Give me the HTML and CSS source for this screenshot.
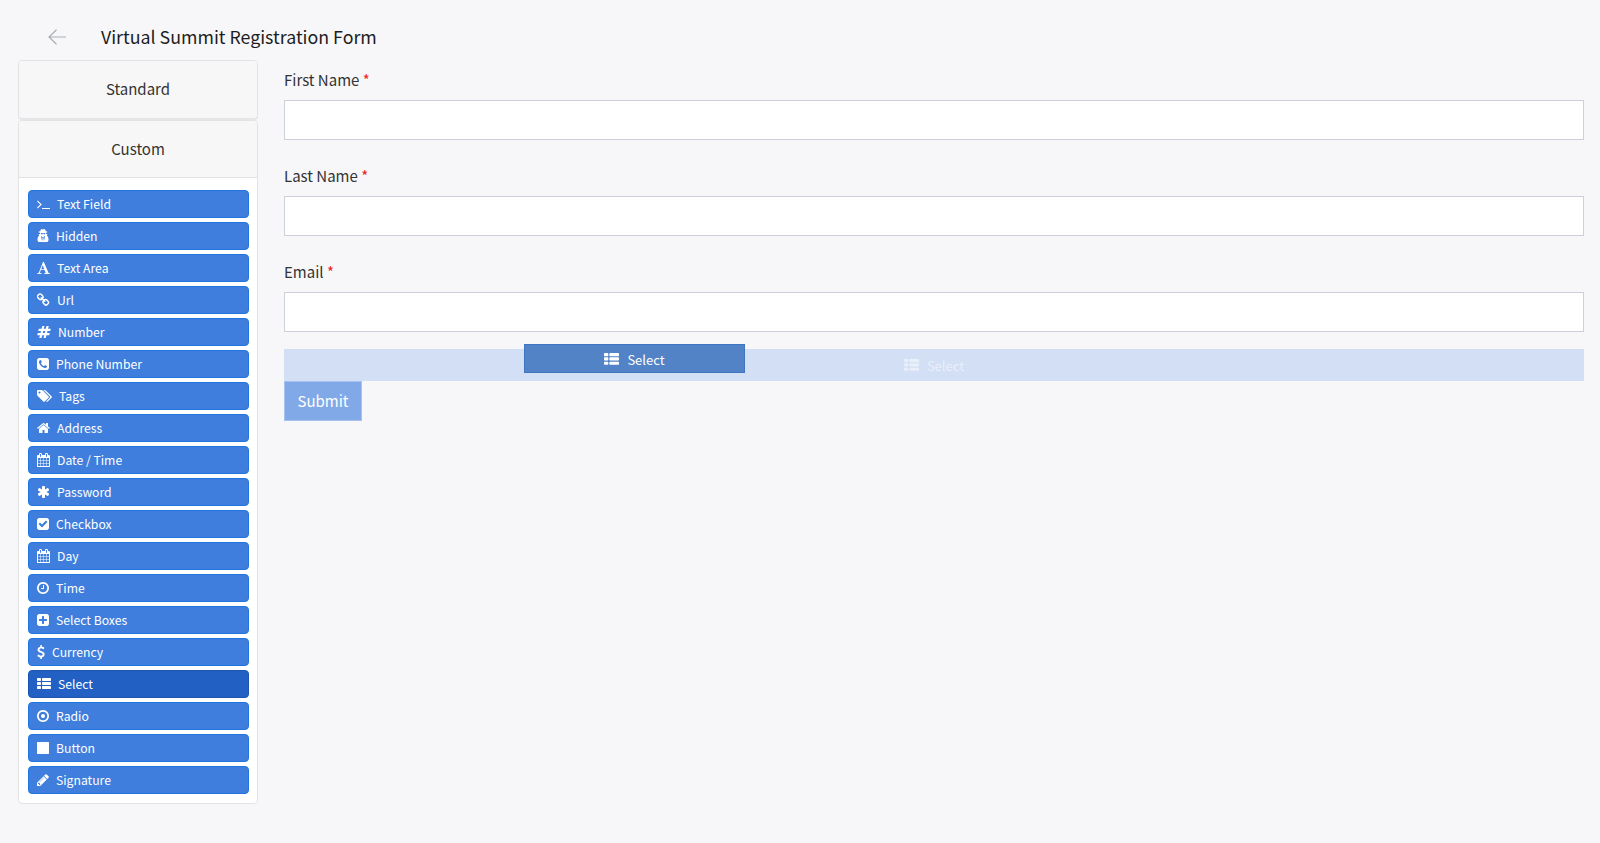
FILE: index.html
```html
<!DOCTYPE html>
<html lang="en">
<head>
    <meta charset="UTF-8">
    <meta name="viewport" content="width=device-width, initial-scale=1.0">
    <title>Virtual Summit Registration Form</title>
    <link rel="stylesheet" href="styles.css">
</head>
<body>
    <!-- Icon set -->
    <svg class="icon-defs" xmlns="http://www.w3.org/2000/svg">
        <symbol id="i-terminal" viewBox="64 0 1664 1792"><path d="M649 983l-466 466q-10 10-23 10t-23-10l-50-50q-10-10-10-23t10-23l393-393-393-393q-10-10-10-23t10-23l50-50q10-10 23-10t23 10l466 466q10 10 10 23t-10 23zm1079 457v64q0 14-9 23t-23 9h-960q-14 0-23-9t-9-23v-64q0-14 9-23t23-9h960q14 0 23 9t9 23z"/></symbol>
        <symbol id="i-secret" viewBox="0 0 1408 1792"><path d="M576 1536l96-448-96-128-128-64zm256 0l128-640-128 64-96 128zm160-1010q-2-4-4-6-10-8-96-8-70 0-167 19-7 2-21 2t-21-2q-97-19-167-19-86 0-96 8-2 2-4 6 2 18 4 27 2 3 7.5 6.5t7.5 10.5q2 4 7.5 20.5t7 20.5 7.5 17 8.5 17 9 14 12 13.5 14 9.5 17.5 8 20.5 4 24.5 2q36 0 59-12.5t32.5-30 14.5-34.5 11.5-29.5 17.5-12.5h12q11 0 17.5 12.5t11.5 29.5 14.5 34.5 32.5 30 59 12.5q13 0 24.5-2t20.5-4 17.5-8 14-9.5 12-13.5 9-14 8.5-17 7.5-17 7-20.5 7.5-20.5q2-7 7.5-10.5t7.5-6.5q2-9 4-27zm416 879q0 121-73 190t-194 69h-874q-121 0-194-69t-73-190q0-61 4.5-118t19-125.5 37.5-123.5 64-104.5 93-75.5l-90-220h214q-22-64-22-128 0-12 2-32-194-40-194-96 0-57 210-99 17-62 51.5-134t70.5-114q32-37 76-37 30 0 84 31t84 31 84-31 84-31q44 0 76 36 36 42 70.5 114t51.5 134q210 42 210 99 0 56-194 96 7 81-20 160h214l-82 225q63 33 107.5 96.5t65.5 143.5 29 151.5 8 148.5z"/></symbol>
        <symbol id="i-font" viewBox="64 0 1664 1792"><path d="M789 559l-170 450q33 0 136.5 2t160.5 2q19 0 57-2-87-253-184-452zm-725 1105l2-79q23-7 56-12.5t57-10.5 49.5-14.5 44.5-29 31-50.5l237-616 280-724h128q8 14 11 21l205 480q33 78 106 257.5t114 274.5q15 34 58 144.5t72 168.5q20 45 35 57 19 15 88 29.5t84 20.5q6 38 6 57 0 5-.5 13.5t-.5 12.5q-63 0-190-8t-191-8q-76 0-215 7t-178 8q0-43 4-78l131-28q1 0 12.5-2.5t15.5-3.5 14.5-4.5 15-6.5 11-8 9-11 2.5-14q0-16-31-96.5t-72-177.5-42-100l-450-2q-26 58-76.5 195.5t-50.5 162.5q0 22 14 37.5t43.5 24.5 48.5 13.5 57 8.5 41 4q1 19 1 58 0 9-2 27-58 0-174.5-10t-174.5-10q-8 0-26.5 4t-21.5 4q-80 14-188 14z"/></symbol>
        <symbol id="i-link" viewBox="128 0 1536 1792"><path d="M1456 1216q0-40-28-68l-208-208q-28-28-68-28-42 0-72 32 3 3 19 18.5t21.5 21.5 15 19 13 25.5 3.5 27.5q0 40-28 68t-68 28q-15 0-27.5-3.5t-25.5-13-19-15-21.5-21.5-18.5-19q-33 31-33 73 0 40 28 68l206 207q27 27 68 27 40 0 68-26l147-146q28-28 28-67zm-703-705q0-40-28-68l-206-207q-28-28-68-28-39 0-68 27l-147 146q-28 28-28 67 0 40 28 68l208 208q27 27 68 27 42 0 72-31-3-3-19-18.5t-21.5-21.5-15-19-13-25.5-3.5-27.5q0-40 28-68t68-28q15 0 27.5 3.5t25.5 13 19 15 21.5 21.5 18.5 19q33-31 33-73zm895 705q0 120-85 203l-147 146q-83 83-203 83-121 0-204-85l-206-207q-83-83-83-203 0-123 88-209l-88-88q-86 88-208 88-120 0-204-84l-208-208q-84-84-84-204t85-203l147-146q83-83 203-83 121 0 204 85l206 207q83 83 83 203 0 123-88 209l88 88q86-88 208-88 120 0 204 84l208 208q84 84 84 204z"/></symbol>
        <symbol id="i-hash" viewBox="0 0 1792 1792"><path d="M991 1024l64-256h-254l-64 256h254zm768-504l-56 224q-7 24-31 24h-327l-64 256h311q15 0 25 12 10 14 6 28l-56 224q-5 24-31 24h-327l-81 328q-7 24-31 24h-224q-16 0-26-12-9-12-6-28l78-312h-254l-81 328q-7 24-31 24h-225q-15 0-25-12-9-12-6-28l78-312h-311q-15 0-25-12-9-12-6-28l56-224q7-24 31-24h327l64-256h-311q-15 0-25-12-10-14-6-28l56-224q5-24 31-24h327l81-328q7-24 32-24h224q15 0 25 12 9 12 6 28l-78 312h254l81-328q7-24 32-24h224q15 0 25 12 9 12 6 28l-78 312h311q15 0 25 12 9 12 6 28z"/></symbol>
        <symbol id="i-phone" viewBox="128 0 1536 1792"><path d="M1408 1193q0-11-2-16t-18-16.5-40.5-25-47.5-26.5-45.5-25-28.5-15q-5-3-19-13t-25-15-21-5q-15 0-36.5 20.5t-39.5 45-38.5 45-33.5 20.5q-7 0-16.5-3.5t-15.5-6.5-17-9.5-14-8.5q-99-55-170-126.5t-127-170.5q-2-3-8.5-14t-9.5-17-6.5-15.5-3.5-16.5q0-13 20.5-33.5t45-38.5 45-39.5 20.5-36.5q0-10-5-21t-15-25-13-19q-3-6-15-28.5t-25-45.5-26.5-47.5-25-40.5-16.5-18-16-2q-48 0-101 22-46 21-80 94.5t-34 130.5q0 16 2.5 34t5 30.5 9 33 10 29.5 12.5 33 11 30q60 164 216.5 320.5t320.5 216.5q6 2 30 11t33 12.5 29.5 10 33 9 30.5 5 34 2.5q57 0 130.5-34t94.5-80q22-53 22-101zm256-777v960q0 119-84.5 203.5t-203.5 84.5h-960q-119 0-203.5-84.5t-84.5-203.5v-960q0-119 84.5-203.5t203.5-84.5h960q119 0 203.5 84.5t84.5 203.5z"/></symbol>
        <symbol id="i-tags" viewBox="0 0 1920 1792"><path d="M448 448q0-53-37.5-90.5t-90.5-37.5-90.5 37.5-37.5 90.5 37.5 90.5 90.5 37.5 90.5-37.5 37.5-90.5zm1067 576q0 53-37 90l-491 492q-39 37-91 37-53 0-90-37l-715-716q-38-37-64.5-101t-26.5-117v-416q0-52 38-90t90-38h416q53 0 117 26.5t102 64.5l715 714q37 39 37 91zm384 0q0 53-37 90l-491 492q-39 37-91 37-36 0-59-14t-53-45l470-470q37-37 37-90 0-52-37-91l-715-714q-38-38-102-64.5t-117-26.5h224q53 0 117 26.5t102 64.5l715 714q37 39 37 91z"/></symbol>
        <symbol id="i-home" viewBox="64 0 1664 1792"><path d="M1472 992v480q0 26-19 45t-45 19h-384v-384h-256v384h-384q-26 0-45-19t-19-45v-480q0-1 .5-3t.5-3l575-474 575 474q1 2 1 6zm223-69l-62 74q-8 9-21 11h-3q-13 0-21-7l-692-577-692 577q-12 8-24 7-13-2-21-11l-62-74q-8-10-7-23.5t11-21.5l719-599q32-26 76-26t76 26l244 204v-195q0-14 9-23t23-9h192q14 0 23 9t9 23v408l219 182q10 8 11 21.5t-7 23.5z"/></symbol>
        <symbol id="i-calendar" viewBox="64 0 1664 1792"><path d="M192 1664h288v-288h-288v288zm352 0h320v-288h-320v288zm-352-352h288v-320h-288v320zm352 0h320v-320h-320v320zm-352-384h288v-288h-288v288zm736 736h320v-288h-320v288zm-384-736h320v-288h-320v288zm768 736h288v-288h-288v288zm-384-352h320v-320h-320v320zm-352-864v-288q0-13-9.5-22.5t-22.5-9.5h-64q-13 0-22.5 9.5t-9.5 22.5v288q0 13 9.5 22.5t22.5 9.5h64q13 0 22.5-9.5t9.5-22.5zm736 864h288v-320h-288v320zm-384-384h320v-288h-320v288zm384 0h288v-288h-288v288zm32-480v-288q0-13-9.5-22.5t-22.5-9.5h-64q-13 0-22.5 9.5t-9.5 22.5v288q0 13 9.5 22.5t22.5 9.5h64q13 0 22.5-9.5t9.5-22.5zm384-64v1280q0 52-38 90t-90 38h-1408q-52 0-90-38t-38-90v-1280q0-52 38-90t90-38h128v-96q0-66 47-113t113-47h64q66 0 113 47t47 113v96h384v-96q0-66 47-113t113-47h64q66 0 113 47t47 113v96h128q52 0 90 38t38 90z"/></symbol>
        <symbol id="i-asterisk" viewBox="128 0 1536 1792"><path d="M1546 1050q46 26 59.5 77.5t-12.5 97.5l-64 110q-26 46-77.5 59.5t-97.5-12.5l-266-153v307q0 52-38 90t-90 38h-128q-52 0-90-38t-38-90v-307l-266 153q-46 26-97.5 12.5t-77.5-59.5l-64-110q-26-46-12.5-97.5t59.5-77.5l266-154-266-154q-46-26-59.5-77.5t12.5-97.5l64-110q26-46 77.5-59.5t97.5 12.5l266 153v-307q0-52 38-90t90-38h128q52 0 90 38t38 90v307l266-153q46-26 97.5-12.5t77.5 59.5l64 110q26 46 12.5 97.5t-59.5 77.5l-266 154z"/></symbol>
        <symbol id="i-check" viewBox="128 0 1536 1792"><path d="M813 1299l614-614q19-19 19-45t-19-45l-102-102q-19-19-45-19t-45 19l-467 467-211-211q-19-19-45-19t-45 19l-102 102q-19 19-19 45t19 45l358 358q19 19 45 19t45-19zm851-883v960q0 119-84.5 203.5t-203.5 84.5h-960q-119 0-203.5-84.5t-84.5-203.5v-960q0-119 84.5-203.5t203.5-84.5h960q119 0 203.5 84.5t84.5 203.5z"/></symbol>
        <symbol id="i-clock" viewBox="128 0 1536 1792"><path d="M1024 544v448q0 14-9 23t-23 9h-320q-14 0-23-9t-9-23v-64q0-14 9-23t23-9h224v-352q0-14 9-23t23-9h64q14 0 23 9t9 23zm416 352q0-148-73-273t-198-198-273-73-273 73-198 198-73 273 73 273 198 198 273 73 273-73 198-198 73-273zm224 0q0 209-103 385.5t-279.5 279.5-385.5 103-385.5-103-279.5-279.5-103-385.5 103-385.5 279.5-279.5 385.5-103 385.5 103 279.5 279.5 103 385.5z"/></symbol>
        <symbol id="i-plus" viewBox="128 0 1536 1792"><path d="M1408 960v-128q0-26-19-45t-45-19h-320v-320q0-26-19-45t-45-19h-128q-26 0-45 19t-19 45v320h-320q-26 0-45 19t-19 45v128q0 26 19 45t45 19h320v320q0 26 19 45t45 19h128q26 0 45-19t19-45v-320h320q26 0 45-19t19-45zm256-544v960q0 119-84.5 203.5t-203.5 84.5h-960q-119 0-203.5-84.5t-84.5-203.5v-960q0-119 84.5-203.5t203.5-84.5h960q119 0 203.5 84.5t84.5 203.5z"/></symbol>
        <symbol id="i-dollar" viewBox="384 0 1024 1792"><path d="M1362 1185q0 153-99.5 263.5t-258.5 136.5v175q0 14-9 23t-23 9h-135q-13 0-22.5-9.5t-9.5-22.5v-175q-66-9-127.5-31t-101.5-44.5-74-48-46.5-37.5-17.5-18q-17-21-2-41l103-135q7-10 23-12 15-2 24 9l2 2q113 99 243 125 37 8 74 8 81 0 142.5-43t61.5-122q0-28-15-53t-33.5-42-58.5-37.5-66-32-80-32.5q-39-16-61.5-25t-61.5-26.5-62.5-31-56.5-35.5-53.5-42.5-43.5-49-35.5-58-21-66.5-8.5-78q0-138 98-242t255-134v-180q0-13 9.5-22.5t22.5-9.5h135q14 0 23 9t9 23v176q57 6 110.5 23t87 33.5 63.5 37.5 39 29 15 14q17 18 5 38l-81 146q-8 15-23 16-14 3-27-7-3-3-14.5-12t-39-26.5-58.5-32-74.5-26-85.5-11.5q-95 0-155 43t-60 111q0 26 8.5 48t29.5 41.5 39.5 33 56 31 60.5 27 70 27.5q53 20 81 31.5t76 35 75.5 42.5 62 50 53 63.5 31.5 76.5 13 94z"/></symbol>
        <symbol id="i-list" viewBox="0 0 1792 1792"><path d="M512 1248v192q0 40-28 68t-68 28h-320q-40 0-68-28t-28-68v-192q0-40 28-68t68-28h320q40 0 68 28t28 68zm0-512v192q0 40-28 68t-68 28h-320q-40 0-68-28t-28-68v-192q0-40 28-68t68-28h320q40 0 68 28t28 68zm1280 512v192q0 40-28 68t-68 28h-960q-40 0-68-28t-28-68v-192q0-40 28-68t68-28h960q40 0 68 28t28 68zm-1280-1024v192q0 40-28 68t-68 28h-320q-40 0-68-28t-28-68v-192q0-40 28-68t68-28h320q40 0 68 28t28 68zm1280 512v192q0 40-28 68t-68 28h-960q-40 0-68-28t-28-68v-192q0-40 28-68t68-28h960q40 0 68 28t28 68zm0-512v192q0 40-28 68t-68 28h-960q-40 0-68-28t-28-68v-192q0-40 28-68t68-28h960q40 0 68 28t28 68z"/></symbol>
        <symbol id="i-dot" viewBox="128 0 1536 1792"><path d="M1152 896q0 106-75 181t-181 75-181-75-75-181 75-181 181-75 181 75 75 181zm-256-544q-148 0-273 73t-198 198-73 273 73 273 198 198 273 73 273-73 198-198 73-273-73-273-198-198-273-73zm768 544q0 209-103 385.5t-279.5 279.5-385.5 103-385.5-103-279.5-279.5-103-385.5 103-385.5 279.5-279.5 385.5-103 385.5 103 279.5 279.5 103 385.5z"/></symbol>
        <symbol id="i-stop" viewBox="128 0 1536 1792"><path d="M1664 192v1408q0 26-19 45t-45 19h-1408q-26 0-45-19t-19-45v-1408q0-26 19-45t45-19h1408q26 0 45 19t19 45z"/></symbol>
        <symbol id="i-pencil" viewBox="128 0 1536 1792"><path d="M491 1536l91-91-235-235-91 91v107h128v128h107zm523-928q0-22-22-22-10 0-17 7l-542 542q-7 7-7 17 0 22 22 22 10 0 17-7l542-542q7-7 7-17zm-54-192l416 416-832 832h-416v-416zm683 96q0 53-37 90l-166 166-416-416 166-165q36-38 90-38 53 0 91 38l235 234q37 39 37 91z"/></symbol>
    </svg>

    <header class="page-head">
        <svg class="back-arrow" viewBox="0 0 18 16" width="18" height="16" fill="none" stroke="#a9adb3" stroke-width="1.2">
            <path d="M18 8H1M8.5 0.8L1 8l7.5 7.2"/>
        </svg>
        <h1>Virtual Summit Registration Form</h1>
    </header>

    <main class="builder">
        <!-- Component list -->
        <aside class="sidebar">
            <div class="panel panel-closed">
                <div class="panel-title">Standard</div>
            </div>
            <div class="panel">
                <div class="panel-title panel-title-open">Custom</div>
                <div class="component-list">
                    <div class="component"><svg class="icon w-13"><use href="#i-terminal"/></svg>Text Field</div>
                    <div class="component"><svg class="icon w-12"><use href="#i-secret"/></svg>Hidden</div>
                    <div class="component"><svg class="icon w-13"><use href="#i-font"/></svg>Text Area</div>
                    <div class="component"><svg class="icon w-13"><use href="#i-link"/></svg>Url</div>
                    <div class="component"><svg class="icon w-14"><use href="#i-hash"/></svg>Number</div>
                    <div class="component"><svg class="icon w-12"><use href="#i-phone"/></svg>Phone Number</div>
                    <div class="component"><svg class="icon w-15"><use href="#i-tags"/></svg>Tags</div>
                    <div class="component"><svg class="icon w-13"><use href="#i-home"/></svg>Address</div>
                    <div class="component"><svg class="icon w-13"><use href="#i-calendar"/></svg>Date / Time</div>
                    <div class="component"><svg class="icon w-13"><use href="#i-asterisk"/></svg>Password</div>
                    <div class="component"><svg class="icon w-12"><use href="#i-check"/></svg>Checkbox</div>
                    <div class="component"><svg class="icon w-13"><use href="#i-calendar"/></svg>Day</div>
                    <div class="component"><svg class="icon w-12"><use href="#i-clock"/></svg>Time</div>
                    <div class="component"><svg class="icon w-12"><use href="#i-plus"/></svg>Select Boxes</div>
                    <div class="component"><svg class="icon w-8"><use href="#i-dollar"/></svg>Currency</div>
                    <div class="component component-active"><svg class="icon w-14"><use href="#i-list"/></svg>Select</div>
                    <div class="component"><svg class="icon w-12"><use href="#i-dot"/></svg>Radio</div>
                    <div class="component"><svg class="icon w-12"><use href="#i-stop"/></svg>Button</div>
                    <div class="component"><svg class="icon w-12"><use href="#i-pencil"/></svg>Signature</div>
                </div>
            </div>
        </aside>

        <!-- Form preview -->
        <form class="form-area">
            <div class="field">
                <label for="firstName">First Name <span class="req">*</span></label>
                <input type="text" id="firstName">
            </div>
            <div class="field">
                <label for="lastName">Last Name <span class="req">*</span></label>
                <input type="text" id="lastName">
            </div>
            <div class="field">
                <label for="email">Email <span class="req">*</span></label>
                <input type="text" id="email">
            </div>
            <div class="drop-zone">
                <svg class="icon icon-lg"><use href="#i-list"/></svg>Select
                <div class="drag-ghost"><svg class="icon icon-lg"><use href="#i-list"/></svg>Select</div>
            </div>
            <button type="button" class="submit-btn">Submit</button>
        </form>
    </main>
</body>
</html>
```

FILE: styles.css
```css
body {
    margin: 0;
    height: 843px;
    overflow: hidden;
    background-color: #f7f7f9;
    color: #222222;
    font-family: "Noto Sans CJK SC", "Noto Sans", sans-serif;
}

.icon-defs {
    display: none;
}

.page-head {
    display: flex;
    align-items: center;
    height: 60px;
    padding: 13px 0 0 48px;
    box-sizing: border-box;
}

.back-arrow {
    margin-right: 35px;
}

.page-head h1 {
    margin: 0 0 1px;
    font-size: 17.8px;
    font-weight: 400;
    color: #1d1d1f;
}

.builder {
    display: flex;
    padding: 0 16px 0 18px;
}

.sidebar {
    flex: 0 0 240px;
    margin-right: 26px;
}

.panel {
    margin-bottom: 1px;
    background-color: #ffffff;
    border: 1px solid #e2e3e5;
    border-radius: 4px;
}

.panel-closed {
    box-shadow: 0 1px 0 #e6e6e8;
}

.panel-title {
    height: 57px;
    line-height: 55px;
    text-align: center;
    font-size: 15px;
    color: #333333;
    background-color: #f7f7f7;
    border-radius: 4px;
}

.panel-title-open {
    height: 56px;
    border-bottom: 1px solid #e2e3e5;
    border-radius: 4px 4px 0 0;
}

.component-list {
    display: flex;
    flex-direction: column;
    gap: 4px;
    padding: 12px 8px 9px 9px;
}

.component {
    display: flex;
    align-items: center;
    height: 28px;
    box-sizing: border-box;
    padding: 0 0 1px 8px;
    background-color: #3f7edc;
    border: 1px solid #1f74df;
    border-radius: 4px;
    color: #ffffff;
    font-size: 12.2px;
}

.component-active {
    background-color: #2260c3;
    border-color: #1c55ad;
}

.icon {
    height: 14px;
    margin-right: 7px;
    fill: currentColor;
}

.icon-lg {
    width: 15px;
    height: 15px;
    margin-right: 8px;
}

.w-8 { width: 8px; }
.w-12 { width: 12px; }
.w-13 { width: 13px; }
.w-14 { width: 14px; }
.w-15 { width: 15px; }

.form-area {
    flex: 1;
    padding-top: 10px;
}

.field {
    margin-bottom: 17px;
}

.field + .field {
    margin-top: 26px;
}

.field label {
    display: block;
    height: 20px;
    line-height: 20px;
    margin-bottom: 10px;
    font-size: 15px;
    color: #333333;
}

.req {
    color: #ee2222;
}

.field input {
    display: block;
    width: 100%;
    height: 40px;
    box-sizing: border-box;
    background-color: #ffffff;
    border: 1px solid #ccd0d9;
}

.drop-zone {
    position: relative;
    display: flex;
    justify-content: center;
    align-items: center;
    height: 32px;
    background-color: #d2dff5;
    color: #e9eff9;
    font-size: 13px;
}

/* dragged item hovering above the drop zone */
.drag-ghost {
    position: absolute;
    top: -5px;
    left: 240px;
    display: flex;
    justify-content: center;
    align-items: center;
    width: 221px;
    height: 29px;
    box-sizing: border-box;
    padding-top: 2px;
    background-color: #5283c7;
    border: 1px solid #3f74c0;
    color: #ffffff;
}

.submit-btn {
    display: block;
    width: 78px;
    height: 40px;
    padding: 0 0 2px;
    background-color: #81a9e8;
    border: 1px solid #a7c2ee;
    color: #ffffff;
    font-family: inherit;
    font-size: 15px;
}
```
